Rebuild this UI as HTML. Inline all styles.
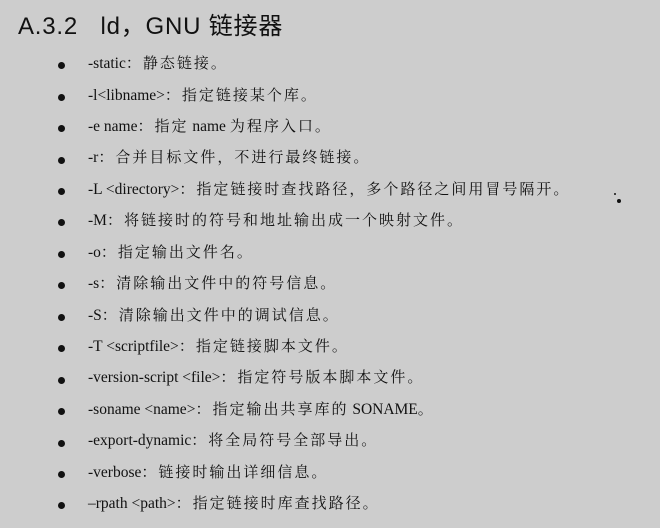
<!DOCTYPE html>
<html><head><meta charset="utf-8"><style>
html,body{margin:0;padding:0}
body{width:660px;height:528px;background:#cdcdcd;position:relative;overflow:hidden;color:#111}
.t{position:absolute;left:18px;top:6px;font:24px "Liberation Sans","Noto Sans CJK SC",sans-serif;white-space:nowrap;letter-spacing:0.8px}
.l{position:absolute;left:88px;font:15.5px "Liberation Serif","Noto Serif CJK SC",serif;white-space:nowrap;line-height:18px}
.l i{font-style:normal;font-size:15px;letter-spacing:2px}
.b{position:absolute;left:58px;width:7px;height:7px;border-radius:50%;background:#111}
.d{position:absolute;border-radius:50%;background:#111}
</style></head><body>
<div class="t">A.3.2&nbsp;&nbsp;&nbsp;ld，GNU 链接器</div>
<div class="b" style="top:62px"></div><div class="l" style="top:55px">-static<i>：静态链接。</i></div>
<div class="b" style="top:94px"></div><div class="l" style="top:87px">-l&lt;libname&gt;<i>：指定链接某个库。</i></div>
<div class="b" style="top:125px"></div><div class="l" style="top:118px">-e name<i>：指定</i> name <i>为程序入口。</i></div>
<div class="b" style="top:157px"></div><div class="l" style="top:149px">-r<i>：合并目标文件，不进行最终链接。</i></div>
<div class="b" style="top:188px"></div><div class="l" style="top:181px">-L &lt;directory&gt;<i>：指定链接时查找路径，多个路径之间用冒号隔开。</i></div>
<div class="b" style="top:219px"></div><div class="l" style="top:212px">-M<i>：将链接时的符号和地址输出成一个映射文件。</i></div>
<div class="b" style="top:251px"></div><div class="l" style="top:244px">-o<i>：指定输出文件名。</i></div>
<div class="b" style="top:282px"></div><div class="l" style="top:275px">-s<i>：清除输出文件中的符号信息。</i></div>
<div class="b" style="top:314px"></div><div class="l" style="top:307px">-S<i>：清除输出文件中的调试信息。</i></div>
<div class="b" style="top:345px"></div><div class="l" style="top:338px">-T &lt;scriptfile&gt;<i>：指定链接脚本文件。</i></div>
<div class="b" style="top:377px"></div><div class="l" style="top:369px">-version-script &lt;file&gt;<i>：指定符号版本脚本文件。</i></div>
<div class="b" style="top:408px"></div><div class="l" style="top:401px">-soname &lt;name&gt;<i>：指定输出共享库的</i> SONAME<i>。</i></div>
<div class="b" style="top:440px"></div><div class="l" style="top:432px">-export-dynamic<i>：将全局符号全部导出。</i></div>
<div class="b" style="top:471px"></div><div class="l" style="top:464px">-verbose<i>：链接时输出详细信息。</i></div>
<div class="b" style="top:502px"></div><div class="l" style="top:495px">–rpath &lt;path&gt;<i>：指定链接时库查找路径。</i></div>
<div class="d" style="left:617px;top:199px;width:4px;height:4px"></div>
<div class="d" style="left:614px;top:193px;width:2px;height:2px"></div>
</body></html>
